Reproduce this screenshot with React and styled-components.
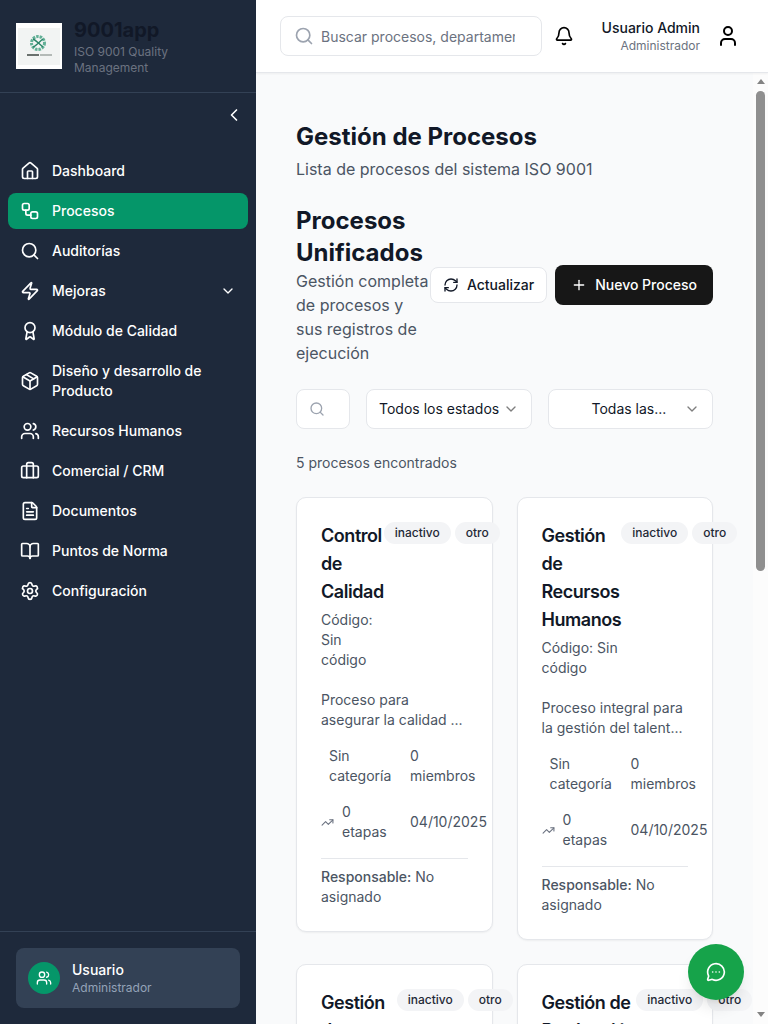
import React from "react";
import styled, { createGlobalStyle } from "styled-components";
import {
  Award,
  Bell,
  BookOpen,
  Briefcase,
  ChevronDown,
  ChevronLeft,
  FileText,
  Home,
  MessageCircleMore,
  Package,
  Plus,
  RefreshCw,
  Search,
  Settings,
  TrendingUp,
  User,
  Users,
  Workflow,
  Zap,
} from "lucide-react";

const navItems = [
  { label: "Dashboard", icon: Home },
  { label: "Procesos", icon: Workflow, active: true },
  { label: "Auditorías", icon: Search },
  { label: "Mejoras", icon: Zap, expandable: true },
  { label: "Módulo de Calidad", icon: Award },
  { label: "Diseño y desarrollo de Producto", icon: Package },
  { label: "Recursos Humanos", icon: Users },
  { label: "Comercial / CRM", icon: Briefcase },
  { label: "Documentos", icon: FileText },
  { label: "Puntos de Norma", icon: BookOpen },
  { label: "Configuración", icon: Settings },
];

const processes = [
  { name: "Control de Calidad", description: "Proceso para asegurar la calidad ..." },
  { name: "Gestión de Recursos Humanos", description: "Proceso integral para la gestión del talent..." },
  { name: "Gestión de Compras", description: "Proceso para la selección de provee..." },
  { name: "Gestión de Producción", description: "Proceso para planificar la producci..." },
  { name: "Gestión Comercial", description: "Proceso para la gestión de clientes y ..." },
];

const App = () => {
  return (
    <>
      <GlobalStyle />
      <Layout>
        <Sidebar>
          <Brand>
            <LogoBox>
              <svg width="46" height="46" viewBox="0 0 46 46">
                <rect x="2" y="5" width="42" height="37" fill="#f2f4f3" />
                <circle cx="22" cy="20" r="6.5" fill="none" stroke="#62b096" strokeWidth="3" strokeDasharray="2.5 1" />
                <path d="M17 24c3-1 7-6 10-8M17 16c3 1 7 6 10 8" fill="none" stroke="#2a8568" strokeWidth="1.4" />
                <rect x="11" y="31" width="12" height="2" fill="#6a716e" />
                <rect x="24" y="31" width="12" height="2" fill="#b4bab7" />
              </svg>
            </LogoBox>
            <div>
              <BrandName>9001app</BrandName>
              <BrandTagline>ISO 9001 Quality Management</BrandTagline>
            </div>
          </Brand>
          <CollapseRow>
            <ChevronLeft size={20} color="#fff" />
          </CollapseRow>
          <Nav>
            {navItems.map((item) => (
              <NavItem key={item.label} $active={item.active}>
                <item.icon size={20} strokeWidth={2} />
                <NavLabel>{item.label}</NavLabel>
                {item.expandable && <ChevronDown size={16} />}
              </NavItem>
            ))}
          </Nav>
          <SidebarFooter>
            <UserCard>
              <Avatar>
                <Users size={16} />
              </Avatar>
              <div>
                <UserCardName>Usuario</UserCardName>
                <UserCardRole>Administrador</UserCardRole>
              </div>
            </UserCard>
          </SidebarFooter>
        </Sidebar>

        <Column>
          <TopBar>
            <TopSearch>
              <Search size={20} color="#9ca3af" />
              <TopSearchInput placeholder="Buscar procesos, departamentos..." />
            </TopSearch>
            <Bell size={20} color="#000" />
            <TopUser>
              <TopUserName>Usuario Admin</TopUserName>
              <TopUserRole>Administrador</TopUserRole>
            </TopUser>
            <User size={24} color="#000" />
          </TopBar>

          <Body>
            <Content>
              <PageTitle>Gestión de Procesos</PageTitle>
              <PageSubtitle>Lista de procesos del sistema ISO 9001</PageSubtitle>

              <SectionHeader>
                <SectionText>
                  <SectionTitle>Procesos Unificados</SectionTitle>
                  <SectionSubtitle>
                    Gestión completa de procesos y sus registros de ejecución
                  </SectionSubtitle>
                </SectionText>
                <Actions>
                  <OutlineButton>
                    <RefreshCw size={16} />
                    Actualizar
                  </OutlineButton>
                  <PrimaryButton>
                    <Plus size={16} />
                    Nuevo Proceso
                  </PrimaryButton>
                </Actions>
              </SectionHeader>

              <Filters>
                <FilterSearch>
                  <Search size={16} color="#9ca3af" />
                </FilterSearch>
                <Select>
                  <SelectText>Todos los estados</SelectText>
                  <ChevronDown size={16} opacity={0.5} />
                </Select>
                <Select>
                  <SelectText $indent>Todas las...</SelectText>
                  <ChevronDown size={16} opacity={0.5} />
                </Select>
              </Filters>

              <ResultCount>5 procesos encontrados</ResultCount>

              <CardGrid>
                {processes.map((process) => (
                  <ProcessCard key={process.name} {...process} />
                ))}
              </CardGrid>
            </Content>
            <ScrollRail>
              <ArrowUp />
              <ScrollThumb />
              <ArrowDown />
            </ScrollRail>
          </Body>
        </Column>

        <ChatButton>
          <MessageCircleMore size={20} />
        </ChatButton>
      </Layout>
    </>
  );
};

const ProcessCard = ({ name, description }) => {
  return (
    <Card>
      <CardHead>
        <CardHeading>
          <CardTitle>{name}</CardTitle>
          <CardCode>Código: Sin código</CardCode>
        </CardHeading>
        <Badges>
          <Badge>inactivo</Badge>
          <Badge>otro</Badge>
        </Badges>
      </CardHead>
      <CardDescription>{description}</CardDescription>
      <Stats>
        <Stat $indent>Sin categoría</Stat>
        <Stat>0 miembros</Stat>
        <Stat>
          <StatIcon>
            <TrendingUp size={13} />
          </StatIcon>
          <span>0 etapas</span>
        </Stat>
        <Stat>04/10/2025</Stat>
      </Stats>
      <CardOwner>
        <strong>Responsable:</strong> No asignado
      </CardOwner>
    </Card>
  );
};

export default App;

const GlobalStyle = createGlobalStyle`
  * {
    box-sizing: border-box;
  }
  html, body {
    margin: 0;
    height: 100%;
    overflow: hidden;
  }
  body {
    font-family: Inter, "Liberation Sans", sans-serif;
  }
`;

const Layout = styled.div`
  display: flex;
  height: 100vh;
  overflow: hidden;
`;

const Sidebar = styled.aside`
  display: flex;
  flex-direction: column;
  flex-shrink: 0;
  width: 256px;
  background: #1e293b;
`;

const Brand = styled.div`
  display: flex;
  align-items: center;
  gap: 12px;
  height: 93px;
  padding: 16px;
  border-bottom: 1px solid #334155;
`;

const LogoBox = styled.div`
  flex-shrink: 0;
  width: 46px;
  height: 46px;
  background: #fff;

  & svg {
    display: block;
  }
`;

const BrandName = styled.div`
  font-size: 20px;
  line-height: 28px;
  font-weight: 700;
  color: #111827;
`;

const BrandTagline = styled.div`
  font-size: 12px;
  line-height: 16px;
  color: #6b7280;
`;

const CollapseRow = styled.div`
  display: flex;
  justify-content: flex-end;
  height: 60px;
  padding: 12px 12px 0 0;
`;

const Nav = styled.nav`
  display: flex;
  flex-direction: column;
  flex: 1;
  gap: 4px;
  padding: 0 8px;
`;

const NavItem = styled.a`
  display: flex;
  align-items: center;
  gap: 12px;
  padding: 8px 12px;
  border-radius: 8px;
  font-size: 14px;
  line-height: 20px;
  font-weight: 500;
  color: #fff;
  background: ${(props) => (props.$active ? "#059669" : "transparent")};

  & svg {
    flex-shrink: 0;
  }
`;

const NavLabel = styled.span`
  flex: 1;
`;

const SidebarFooter = styled.div`
  padding: 16px;
  border-top: 1px solid #334155;
`;

const UserCard = styled.div`
  display: flex;
  align-items: center;
  gap: 12px;
  height: 60px;
  padding: 0 12px;
  border-radius: 8px;
  background: #334155;
`;

const Avatar = styled.div`
  display: flex;
  align-items: center;
  justify-content: center;
  width: 32px;
  height: 32px;
  border-radius: 50%;
  background: #059669;
  color: #fff;
`;

const UserCardName = styled.div`
  font-size: 14px;
  line-height: 20px;
  font-weight: 500;
  color: #fff;
`;

const UserCardRole = styled.div`
  font-size: 12px;
  line-height: 16px;
  color: #94a3b8;
`;

const Column = styled.div`
  display: flex;
  flex-direction: column;
  flex: 1;
  min-width: 0;
`;

const TopBar = styled.header`
  display: flex;
  align-items: center;
  flex-shrink: 0;
  height: 73px;
  padding: 0 28px 0 24px;
  background: #fff;
  border-bottom: 1px solid #e5e7eb;
  box-shadow: 0 1px 2px rgba(0, 0, 0, 0.05);
  z-index: 1;
`;

const TopSearch = styled.div`
  display: flex;
  align-items: center;
  gap: 7px;
  width: 262px;
  height: 40px;
  margin-right: 12px;
  padding: 0 26px 0 13px;
  border: 1px solid #e5e7eb;
  border-radius: 8px;
  background: #fff;
`;

const TopSearchInput = styled.input`
  flex: 1;
  min-width: 0;
  border: none;
  outline: none;
  padding: 0;
  background: transparent;
  font-family: inherit;
  font-size: 14px;

  &::placeholder {
    color: #6b7280;
  }
`;

const TopUser = styled.div`
  margin-left: auto;
  margin-right: 16px;
  text-align: right;
`;

const TopUserName = styled.div`
  font-size: 14px;
  line-height: 20px;
  font-weight: 500;
  color: #111827;
`;

const TopUserRole = styled.div`
  font-size: 12px;
  line-height: 16px;
  color: #6b7280;
`;

const Body = styled.div`
  display: flex;
  flex: 1;
  min-height: 0;
`;

const Content = styled.main`
  flex: 1;
  min-width: 0;
  overflow: hidden;
  padding: 48px 40px;
  background: #f9fafb;
`;

const ScrollRail = styled.div`
  display: flex;
  flex-direction: column;
  align-items: center;
  flex-shrink: 0;
  width: 15px;
  padding: 6px 0 7px;
  background: #fcfcfc;
`;

const ArrowUp = styled.div`
  width: 0;
  height: 0;
  border-left: 4.5px solid transparent;
  border-right: 4.5px solid transparent;
  border-bottom: 5px solid #838383;
`;

const ArrowDown = styled.div`
  width: 0;
  height: 0;
  margin-top: auto;
  border-left: 4.5px solid transparent;
  border-right: 4.5px solid transparent;
  border-top: 5px solid #838383;
`;

const ScrollThumb = styled.div`
  width: 9px;
  height: 480px;
  margin-top: 7px;
  border-radius: 5px;
  background: #8f8f8f;
`;

const PageTitle = styled.h1`
  margin: 0;
  font-size: 24px;
  line-height: 32px;
  font-weight: 700;
  color: #111827;
`;

const PageSubtitle = styled.p`
  margin: 4px 0 0;
  font-size: 16px;
  line-height: 24px;
  color: #4b5563;
`;

const SectionHeader = styled.div`
  display: flex;
  align-items: center;
  justify-content: space-between;
  margin-top: 24px;
`;

const SectionText = styled.div`
  flex: 1;
  min-width: 0;
`;

const SectionTitle = styled.h2`
  margin: 0;
  font-size: 24px;
  line-height: 32px;
  font-weight: 700;
  color: #111827;
`;

const SectionSubtitle = styled.p`
  margin: 0;
  font-size: 16px;
  line-height: 24px;
  color: #4b5563;
`;

const Actions = styled.div`
  display: flex;
  align-items: center;
  flex-shrink: 0;
  gap: 8px;
`;

const OutlineButton = styled.button`
  display: flex;
  align-items: center;
  gap: 8px;
  height: 36px;
  padding: 0 12px;
  border: 1px solid #e5e7eb;
  border-radius: 8px;
  background: #fff;
  font-family: inherit;
  font-size: 14px;
  line-height: 20px;
  font-weight: 500;
  color: #111827;
`;

const PrimaryButton = styled.button`
  display: flex;
  align-items: center;
  gap: 8px;
  height: 40px;
  padding: 0 16px;
  border: none;
  border-radius: 8px;
  background: #171717;
  font-family: inherit;
  font-size: 14px;
  line-height: 20px;
  font-weight: 500;
  color: #fff;
`;

const Filters = styled.div`
  display: flex;
  gap: 16px;
  margin-top: 24px;
`;

const FilterSearch = styled.div`
  display: flex;
  align-items: center;
  width: 54px;
  height: 40px;
  padding-left: 12px;
  border: 1px solid #e5e7eb;
  border-radius: 8px;
  background: #fff;
`;

const Select = styled.div`
  display: flex;
  align-items: center;
  justify-content: space-between;
  flex: 1;
  height: 40px;
  padding: 0 12px;
  border: 1px solid #e5e7eb;
  border-radius: 8px;
  background: #fff;
`;

const SelectText = styled.span`
  padding-left: ${(props) => (props.$indent ? "31px" : "0")};
  font-size: 14px;
  line-height: 20px;
  color: #111827;
`;

const ResultCount = styled.p`
  margin: 24px 0;
  font-size: 14px;
  line-height: 20px;
  color: #4b5563;
`;

const CardGrid = styled.div`
  display: grid;
  grid-template-columns: repeat(2, minmax(0, 1fr));
  align-items: start;
  gap: 24px;
`;

const Card = styled.article`
  padding: 24px;
  border: 1px solid #e5e7eb;
  border-radius: 10px;
  background: #fff;
  box-shadow: 0 1px 2px rgba(0, 0, 0, 0.05);
`;

const CardHead = styled.div`
  display: flex;
  align-items: flex-start;
`;

const CardHeading = styled.div`
  flex: 0 1 auto;
`;

const CardTitle = styled.h3`
  margin: 0;
  font-size: 18px;
  line-height: 28px;
  font-weight: 600;
  letter-spacing: -0.025em;
  color: #111827;
`;

const CardCode = styled.p`
  margin: 4px 0 0;
  font-size: 14px;
  line-height: 20px;
  color: #4b5563;
`;

const Badges = styled.div`
  display: flex;
  flex-shrink: 0;
  gap: 4px;
`;

const Badge = styled.span`
  padding: 2px 10px;
  border: 1px solid transparent;
  border-radius: 999px;
  background: #f3f4f6;
  font-size: 12px;
  line-height: 16px;
  font-weight: 500;
  color: #1f2937;
`;

const CardDescription = styled.p`
  margin: 20px 0 0;
  font-size: 14px;
  line-height: 20px;
  color: #4b5563;
`;

const Stats = styled.div`
  display: grid;
  grid-template-columns: 77px auto;
  gap: 16px 12px;
  margin-top: 16px;
`;

const Stat = styled.div`
  display: flex;
  align-items: center;
  gap: 8px;
  padding-left: ${(props) => (props.$indent ? "8px" : "0")};
  font-size: 14px;
  line-height: 20px;
  color: #4b5563;
`;

const StatIcon = styled.span`
  display: flex;
  flex-shrink: 0;
  color: #6b7280;
`;

const CardOwner = styled.p`
  margin: 16px 0 0;
  padding-top: 8px;
  border-top: 1px solid #e5e7eb;
  font-size: 14px;
  line-height: 20px;
  color: #4b5563;

  & strong {
    font-weight: 500;
  }
`;

const ChatButton = styled.button`
  position: fixed;
  right: 24px;
  bottom: 24px;
  display: flex;
  align-items: center;
  justify-content: center;
  width: 56px;
  height: 56px;
  border: none;
  border-radius: 50%;
  background: #16a34a;
  color: #fff;
  box-shadow: 0 10px 15px -3px rgba(0, 0, 0, 0.1), 0 4px 6px -4px rgba(0, 0, 0, 0.1);
  z-index: 2;
`;
